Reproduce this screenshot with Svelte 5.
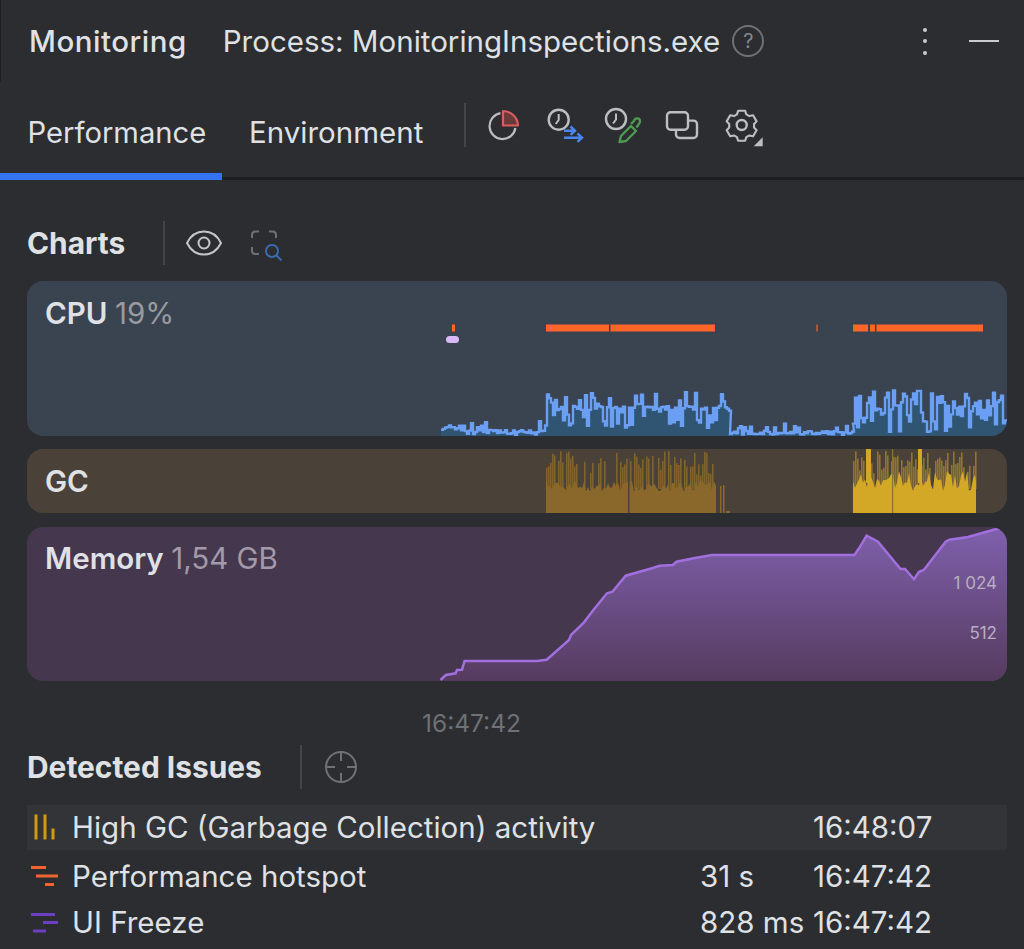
<script>
  // small seeded random so the noisy charts come out the same on every load
  function seeded(a) {
    return () => {
      a = (a + 0x6d2b79f5) | 0;
      let t = Math.imul(a ^ (a >>> 15), 1 | a);
      t = (t + Math.imul(t ^ (t >>> 7), 61 | t)) ^ t;
      return ((t ^ (t >>> 14)) >>> 0) / 4294967296;
    };
  }

  // chart box coordinates: x from card left, y from card top
  function cpuLine() {
    const r = seeded(19);
    const spans = [
      { from: 414, to: 438, level: 146, up: 10, down: 8, spike: 0.25 },
      { from: 438, to: 518, level: 151, up: 12, down: 3, spike: 0.4 },
      { from: 518, to: 703, level: 127, up: 17, down: 22, spike: 0.6 },
      { from: 703, to: 826, level: 152, up: 9, down: 2, spike: 0.4 },
      { from: 826, to: 980, level: 124, up: 14, down: 28, spike: 0.9 },
    ];
    const pts = [];
    for (const s of spans) {
      for (let x = s.from; x < s.to; x += 2) {
        const k = r();
        let y = s.level + (r() - 0.5) * 4;
        if (k < s.spike / 2) y += r() * s.down;
        else if (k < s.spike) y -= r() * s.up;
        // stepped, the chart draws one flat sample per tick
        y = Math.min(y, 154).toFixed(1);
        pts.push(`${x},${y}`, `${x + 2},${y}`);
      }
    }
    return pts;
  }
  const cpu = cpuLine();
  const cpuArea = `414,155 ${cpu.join(" ")} 980,155`;

  function gcBars(from, to, seed, base, jag) {
    const r = seeded(seed);
    const spikes = [];
    let top = `${from},64`;
    for (let x = from; x < to; x += 2) {
      top += ` ${x},${(base + (r() - 0.5) * jag).toFixed(1)}`;
      if (r() < 0.8) spikes.push({ x, y: 1 + r() * 18 + (r() < 0.3 ? 8 : 0) });
    }
    return { area: `${top} ${to},${base} ${to},64`, spikes };
  }
  const gcLeft = gcBars(519, 689, 7, 37, 12);
  const gcRight = gcBars(826, 949, 11, 32, 20);

  // traced off the memory curve
  const memPts = [
    [413.5,153],[419,148],[428.6,146.3],[430,143],[435,142.7],[437.6,134],[510,134],[519.7,132.7],
    [542,113],[544,108],[557,95.3],[565,84.7],[580,66.3],[585.5,64.7],[598.7,48.7],[625,41.3],
    [632.6,38.7],[645.8,38],[649.5,34.7],[666.5,31.3],[685,28],[827.5,28],[832,21.3],[839.6,8.7],
    [851,14.7],[873.5,42],[878,42],[887,52.3],[892,44.7],[896.8,43],[918.6,14.7],[922.4,12.7],
    [941,10],[969.4,2],[981,0],
  ];
  const memLine = memPts.map((p) => p.join(",")).join(" ");
  const memArea = `${memLine} 981,155 413.5,155`;

  const issues = [
    { kind: "gc", name: "High GC (Garbage Collection) activity", dur: "", time: "16:48:07" },
    { kind: "hot", name: "Performance hotspot", dur: "31 s", time: "16:47:42" },
    { kind: "ui", name: "UI Freeze", dur: "828 ms", time: "16:47:42" },
  ];
</script>

<div class="panel">
  <header class="head">
    <span class="title">Monitoring</span>
    <span class="process">Process: MonitoringInspections.exe</span>
    <span class="help">?</span>
    <span class="spring"></span>
    <span class="dots"><i></i><i></i><i></i></span>
    <span class="minus"></span>
  </header>

  <nav class="tabs">
    <div class="tab active">Performance</div>
    <div class="tab">Environment</div>
    <span class="sep tabsep"></span>
    <div class="tools">
      <svg viewBox="0 0 40 40" fill="none">
        <g transform="translate(-3 0)">
          <path d="M17.5 7.2A13 13 0 1 0 32.4 22" stroke="#bcbec2" stroke-width="2.2" />
          <path d="M20 5A15 15 0 0 1 35 19.5H20Z" fill="#6a3a3b" stroke="#db5c5c" stroke-width="2.2" stroke-linejoin="round" />
        </g>
      </svg>
      <svg viewBox="0 0 40 40" fill="none">
        <circle cx="13.7" cy="13.7" r="10" stroke="#bcbec2" stroke-width="2.4" />
        <path d="M13.7 8v6l-3 4" stroke="#bcbec2" stroke-width="2" />
        <path d="M19 24.7h11M25.5 20.5l4.5 4.2-4.5 4.2M19 31.7h18M32.5 27.5l4.5 4.2-4.5 4.2" stroke="#4a86f0" stroke-width="2.4" />
      </svg>
      <svg viewBox="0 0 40 40" fill="none">
        <circle cx="12" cy="13" r="10" stroke="#bcbec2" stroke-width="2.4" />
        <path d="M12 7.5v6l-3 4" stroke="#bcbec2" stroke-width="2" />
        <path d="M15.5 36l1.5-6 10-10 5 5-10 10zM27 18l3-3c1-4 6-3 6 0 0 1.5-.5 2.5-1.5 3.5l-2 3" stroke="#4e9a52" stroke-width="2.4" stroke-linejoin="round" />
      </svg>
      <svg viewBox="0 0 40 40" fill="none">
        <rect x="4" y="6.3" width="21" height="17.5" rx="3.5" stroke="#bcbec2" stroke-width="2.4" />
        <path d="M25.5 14.6h5a3.5 3.5 0 0 1 3.5 3.5v10.4a3.5 3.5 0 0 1-3.5 3.5h-14a3.5 3.5 0 0 1-3.5-3.5V24" stroke="#bcbec2" stroke-width="2.4" />
      </svg>
      <svg viewBox="0 0 40 40" fill="none" class="gear">
        <g transform="translate(-1 0)">
          <path d="M16.5 5h8l1.3 4 3.500 2 4.200-.9 4 6.900-2.900 3 0 4 2.900 3-4 7-4.200-1-3.500 2-1.300 4h-8l-1.300-4-3.500-2-4.200 1-4-7 2.900-3 0-4-2.900-3 4-6.900 4.200.9 3.500-2z" transform="translate(2.6 .4) scale(.88)" stroke="#bcbec2" stroke-width="2.4" stroke-linejoin="round" />
          <circle cx="20.7" cy="19" r="5" stroke="#bcbec2" stroke-width="2.4" />
          <path d="M32.7 40.3h9v-9z" fill="#bcbec2" />
        </g>
      </svg>
    </div>
  </nav>

  <section class="charts">
    <div class="sechead charthead">
      <h2>Charts</h2>
      <span class="sep"></span>
      <svg class="eye" viewBox="0 0 36 26" fill="none">
        <path d="M1 13C5 5 11 1.5 18 1.5S31 5 35 13c-4 8-10 11.5-17 11.5S5 21 1 13Z" stroke="#c4c6ca" stroke-width="2" />
        <circle cx="18" cy="13" r="5.5" stroke="#c4c6ca" stroke-width="2" />
      </svg>
      <svg class="scan" viewBox="0 0 34 30" fill="none">
        <path d="M1 8V5c0-2 1.5-3.5 3.5-3.5H8M18 1.5h3.5c2 0 3.5 1.5 3.5 3.5v3M1 17v3.500c0 2 1.5 3.5 3.5 3.5H8" stroke="#6f7176" stroke-width="2" />
        <circle cx="21" cy="21" r="6" stroke="#3d6bb0" stroke-width="2" />
        <path d="M25.5 25.5l5 5" stroke="#3d6bb0" stroke-width="2" />
      </svg>
    </div>

    <div class="chart cpu">
      <svg viewBox="0 0 980 155" class="plot">
        <polygon points={cpuArea} fill="#2f5573" />
        <polyline points={cpu.join(" ")} fill="none" stroke="#6a9ff3" stroke-width="2.4" />
        <rect x="425" y="43.5" width="3" height="7" fill="#ff6428" />
        <rect x="419" y="55" width="13" height="7" rx="3.5" fill="#d9baf6" />
        <rect x="519" y="43.5" width="63" height="7" fill="#ff6428" />
        <rect x="583.5" y="43.5" width="104.5" height="7" fill="#ff6428" />
        <rect x="789" y="43.5" width="2" height="7" fill="#a8583a" />
        <rect x="826" y="43.5" width="15" height="7" fill="#ff6428" />
        <rect x="843" y="43.5" width="5" height="7" fill="#ff6428" />
        <rect x="849.5" y="43.5" width="106.5" height="7" fill="#ff6428" />
      </svg>
      <div class="label">CPU <span>19%</span></div>
    </div>

    <div class="chart gc">
      <svg viewBox="0 0 980 64" class="plot">
        <polygon points={gcLeft.area} fill="#8a672b" />
        {#each gcLeft.spikes as s}
          <rect x={s.x} y={s.y} width="1.6" height={40 - s.y} fill="#8a672b" opacity="0.85" />
        {/each}
        <rect x="601" y="0" width="1.5" height="64" fill="#4a4238" />
        <rect x="693" y="37" width="1.5" height="27" fill="#8a672b" />
        <rect x="696" y="36" width="1.5" height="28" fill="#8a672b" />
        <rect x="699" y="62" width="4" height="2" fill="#8a672b" />
        <polygon points={gcRight.area} fill="#d4a827" />
        {#each gcRight.spikes as s}
          <rect x={s.x} y={s.y} width="1.6" height={40 - s.y} fill="#d4a827" opacity="0.5" />
        {/each}
        <rect x="839" y="0" width="5" height="34" fill="#d4a827" />
        <rect x="891" y="0" width="4" height="34" fill="#d4a827" />
        <rect x="865" y="0" width="1.2" height="64" fill="#8a7233" />
      </svg>
      <div class="label">GC</div>
    </div>

    <div class="chart mem">
      <svg viewBox="0 0 980 154" class="plot">
        <defs>
          <linearGradient id="memfill" x1="0" y1="0" x2="0" y2="1">
            <stop offset="0" stop-color="#7f60ad" />
            <stop offset="1" stop-color="#553b5e" />
          </linearGradient>
        </defs>
        <polygon points={memArea} fill="url(#memfill)" />
        <polyline points={memLine} fill="none" stroke="#a26fdf" stroke-width="2.5" />
      </svg>
      <div class="label">Memory <span>1,54 GB</span></div>
      <div class="tick t1">1 024</div>
      <div class="tick t2">512</div>
    </div>

    <div class="axis">16:47:42</div>
  </section>

  <section class="issues">
    <div class="sechead">
      <h2>Detected Issues</h2>
      <span class="sep"></span>
      <svg class="cross" viewBox="0 0 34 34" fill="none" stroke="#6f7176" stroke-width="2">
        <circle cx="17" cy="17" r="15" />
        <path d="M17 2v9M17 23v9M2 17h9M23 17h9" />
      </svg>
    </div>

    <div class="list">
      {#each issues as it, i}
        <div class="row" class:hl={i === 0}>
          <svg class="issue-icon" viewBox="0 0 32 32" fill="none" stroke-width="3">
            {#if it.kind === "gc"}
              <path d="M7 3.5v25M16 3.5v25M24 17.5v11" stroke="#d19a10" />
            {:else if it.kind === "hot"}
              <path d="M2 7.5h15M7 16h22M16 24.5h9" stroke="#f0652f" />
            {:else}
              <path d="M2 8.5h24M14 16.5h15M4 25h13" stroke="#6b3fc2" />
            {/if}
          </svg>
          <span class="name">{it.name}</span>
          <span class="dur">{it.dur}</span>
          <span class="time">{it.time}</span>
        </div>
      {/each}
    </div>
  </section>
</div>

<style>
  :global(body) {
    background: #2b2d30;
  }

  .panel {
    width: 1024px;
    height: 949px;
    overflow: hidden;
    background: #2b2d30;
    color: #dfe1e5;
    font-family: Inter, "Noto Sans", sans-serif;
    font-size: 29.5px;
  }

  .head {
    display: flex;
    align-items: center;
    height: 82px;
    padding: 0 25px 0 28px;
    border-left: 1px solid #1e1f22;
    box-sizing: border-box;
  }

  .title {
    font-weight: 500;
    letter-spacing: 0.5px;
  }

  .process {
    margin-left: 36px;
  }

  .help {
    width: 28px;
    height: 28px;
    margin-left: 12px;
    border: 2px solid #6f7176;
    border-radius: 50%;
    color: #86888d;
    font-size: 20px;
    line-height: 28px;
    text-align: center;
  }

  .spring {
    flex: 1;
  }

  .dots {
    display: flex;
    flex-direction: column;
    gap: 7.5px;
    margin-right: 42px;
  }

  .dots i {
    width: 4px;
    height: 4px;
    border-radius: 50%;
    background: #c9ccd0;
  }

  .minus {
    width: 30px;
    height: 2px;
    background: #c9ccd0;
  }

  .tabs {
    display: flex;
    align-items: center;
    height: 98px;
    box-sizing: border-box;
    border-bottom: 3px solid #1e1f22;
  }

  .tab {
    padding: 0 15px 0 27.5px;
    height: 100%;
    line-height: 100px;
    box-sizing: border-box;
  }

  .tab.active {
    width: 221.5px;
    font-size: 29.2px;
    line-height: 102px;
    white-space: nowrap;
    position: relative;
  }

  .tab.active::after {
    content: "";
    position: absolute;
    left: 0;
    right: 0;
    bottom: -3px;
    height: 7px;
    background: #3574f0;
  }

  .sep {
    width: 2px;
    height: 44px;
    background: #43454a;
  }

  .tabsep {
    margin-left: 26px;
    margin-top: -9px;
  }

  .tools {
    display: flex;
    gap: 19px;
    margin-left: 20px;
    margin-top: -7px;
  }

  .tools svg {
    width: 40px;
    height: 40px;
    overflow: visible;
  }

  .charts {
    padding: 41px 17px 0 27px;
  }

  .sechead {
    display: flex;
    align-items: center;
    height: 44px;
  }

  .sechead h2 {
    margin: 0;
    font-size: 29.9px;
    font-weight: 700;
    white-space: nowrap;
  }

  .charthead {
    margin-bottom: 16px;
  }

  .charthead .sep {
    margin-left: 38px;
  }

  .eye {
    width: 36px;
    height: 26px;
    margin-left: 21px;
  }

  .scan {
    width: 34px;
    height: 30px;
    margin-left: 29px;
    margin-top: 3px;
    overflow: visible;
  }

  .chart {
    position: relative;
    overflow: hidden;
    border-radius: 16px;
    margin-bottom: 14px;
  }

  .plot {
    position: absolute;
    inset: 0;
    width: 100%;
    height: 100%;
  }

  .label {
    position: relative;
    padding: 15px 0 0 18px;
    font-weight: 600;
    line-height: 34px;
  }

  .label span {
    font-weight: 400;
    color: #999ba0;
  }

  .cpu {
    height: 155px;
    margin-bottom: 13px;
    background: #3a4350;
  }

  .gc {
    height: 64px;
    background: #4a4238;
  }

  .mem {
    height: 154px;
    background: #45374e;
  }

  .mem .label {
    padding-top: 14px;
  }

  .mem .label span {
    color: #a39aa9;
  }

  .tick {
    position: absolute;
    right: 10px;
    font-size: 17px;
    color: #b9aec1;
  }

  .t1 {
    top: 46px;
  }

  .t2 {
    top: 96px;
  }

  .axis {
    margin-top: 27px;
    margin-left: 395px;
    font-size: 24.5px;
    line-height: 30px;
    color: #6f7176;
  }

  .issues {
    padding: 7px 17px 0 27px;
  }

  .issues .sep {
    margin-left: 38px;
  }

  .cross {
    width: 34px;
    height: 34px;
    margin-left: 22px;
  }

  .list {
    margin-top: 16px;
  }

  .row {
    display: grid;
    grid-template-columns: 45px 628px 113px auto;
    align-items: center;
    height: 45px;
  }

  .row.hl {
    box-sizing: border-box;
    padding-bottom: 2px;
    background: #323438;
    margin-bottom: 3px;
  }

  .row:last-child {
    margin-top: 1px;
  }

  .issue-icon {
    width: 32px;
    height: 32px;
    margin-left: 2px;
  }

  .name,
  .dur,
  .time {
    white-space: nowrap;
  }
</style>
